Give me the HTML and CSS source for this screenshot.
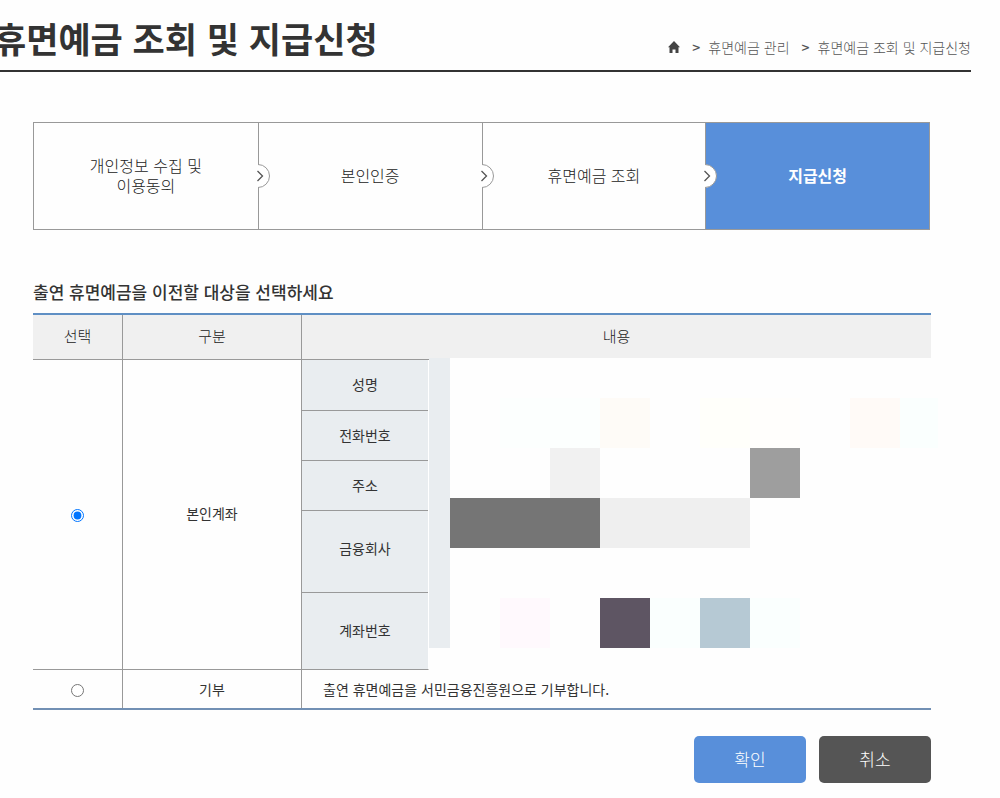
FILE: index.html
```html
<!DOCTYPE html>
<html lang="ko">
<head>
<meta charset="utf-8">
<title>휴면예금 조회 및 지급신청</title>
<meta name="viewport" content="width=device-width, initial-scale=1">
<link rel="stylesheet" href="styles.css">
</head>
<body>
<header class="page-header">
  <h1 class="page-title">휴면예금 조회 및 지급신청</h1>
  <nav class="breadcrumb" aria-label="현재 위치">
    <a class="home" href="#" aria-label="홈"><svg width="12" height="12" viewBox="0 0 12 12" aria-hidden="true"><path fill="#444" d="M6 0 12 6.300H10.500V12H7.500V8.500H4.500V12H1.500V6.300H0Z"/></svg></a>
    <span class="sep">&gt;</span>
    <a href="#">휴면예금 관리</a>
    <span class="sep">&gt;</span>
    <a href="#">휴면예금 조회 및 지급신청</a>
  </nav>
</header>
<main class="content">
  <ol class="steps">
    <li class="step">개인정보 수집 및<br>이용동의</li>
    <li class="step"><svg class="arrow" width="13" height="24" viewBox="0 0 13 24" aria-hidden="true"><path d="M0 0.500H1A11.500 11.500 0 0 1 1 23.500H0Z" fill="#fff"/><path d="M1 0.500A11.500 11.500 0 0 1 1 23.500" fill="none" stroke="#999"/><path d="M0.500 7 5.500 12 0.500 17" fill="none" stroke="#555" stroke-width="1.300"/></svg>본인인증</li>
    <li class="step"><svg class="arrow" width="13" height="24" viewBox="0 0 13 24" aria-hidden="true"><path d="M0 0.500H1A11.500 11.500 0 0 1 1 23.500H0Z" fill="#fff"/><path d="M1 0.500A11.500 11.500 0 0 1 1 23.500" fill="none" stroke="#999"/><path d="M0.500 7 5.500 12 0.500 17" fill="none" stroke="#555" stroke-width="1.300"/></svg>휴면예금 조회</li>
    <li class="step current" aria-current="step"><svg class="arrow" width="13" height="24" viewBox="0 0 13 24" aria-hidden="true"><path d="M0 0.500H1A11.500 11.500 0 0 1 1 23.500H0Z" fill="#fff"/><path d="M1 0.500A11.500 11.500 0 0 1 1 23.500" fill="none" stroke="#999"/><path d="M0.500 7 5.500 12 0.500 17" fill="none" stroke="#555" stroke-width="1.300"/></svg>지급신청</li>
  </ol>
  <form class="transfer">
    <h2 class="section-title">출연 휴면예금을 이전할 대상을 선택하세요</h2>
    <table class="target">
      <colgroup><col class="col-pick"><col class="col-kind"><col class="col-label"><col></colgroup>
      <thead>
        <tr><th scope="col">선택</th><th scope="col">구분</th><th scope="col" colspan="2">내용</th></tr>
      </thead>
      <tbody>
        <tr class="row">
          <td class="pick" rowspan="5"><input type="radio" name="target" id="own" checked></td>
          <td class="kind" rowspan="5"><label for="own">본인계좌</label></td>
          <th class="label" scope="row">성명</th>
          <td class="masked" rowspan="5">
            <div class="mosaic" aria-hidden="true">
              <i class="m1"></i><i class="m2"></i><i class="m3"></i><i class="m4"></i><i class="m5"></i><i class="m6"></i><i class="m7"></i><i class="m8"></i><i class="m9"></i><i class="m10"></i><i class="m11"></i><i class="m12"></i><i class="m13"></i><i class="m14"></i><i class="m15"></i><i class="m16"></i>
            </div>
          </td>
        </tr>
        <tr class="row"><th class="label" scope="row">전화번호</th></tr>
        <tr class="row"><th class="label" scope="row">주소</th></tr>
        <tr class="row tall"><th class="label" scope="row">금융회사</th></tr>
        <tr class="row account"><th class="label" scope="row">계좌번호</th></tr>
        <tr class="donate">
          <td class="pick"><input type="radio" name="target" id="donate"></td>
          <td class="kind"><label for="donate">기부</label></td>
          <td class="note" colspan="2">출연 휴면예금을 서민금융진흥원으로 기부합니다.</td>
        </tr>
      </tbody>
    </table>
    <div class="actions">
      <button class="btn primary" type="submit">확인</button>
      <button class="btn" type="button">취소</button>
    </div>
  </form>
</main>
</body>
</html>
```
FILE: styles.css
```css
* { box-sizing: border-box; }
body {
  margin: 0;
  overflow-x: hidden;
  background: #fefefe;
  color: #222;
  font: 300 14px/20px "Noto Sans CJK KR", sans-serif;
}
a { color: inherit; text-decoration: none; }

.page-header {
  display: flex;
  justify-content: space-between;
  align-items: center;
  height: 72px;
  margin: 0 29px 0 -6px;
  padding-top: 6px;
  border-bottom: 2px solid #333;
}
.page-title { margin: 0; font-size: 35px; line-height: 50px; font-weight: 700; color: #333; }
.breadcrumb { display: flex; align-items: center; padding-top: 18px; color: #555; }
.home { display: flex; }
.sep { width: 28px; padding-left: 4px; text-align: center; font-weight: 500; }

.content { padding: 50px 69px 0 33px; }
.steps {
  display: grid;
  grid-template-columns: repeat(4, 1fr);
  height: 108px;
  margin: 0 1px 0 0;
  padding: 0;
  border: 1px solid #999;
  list-style: none;
}
.step {
  position: relative;
  display: flex;
  align-items: center;
  justify-content: center;
  padding-bottom: 3px;
  text-align: center;
  font-size: 16px;
}
.step + .step { border-left: 1px solid #999; }
.current { background: #588fda; color: #fff; font-weight: 700; }
.arrow { position: absolute; left: -2px; top: 41px; }

.section-title { margin: 50px 0 9px; font-size: 17px; line-height: 24px; font-weight: 500; color: #333; }
.target {
  width: 100%;
  table-layout: fixed;
  border-collapse: separate;
  border-spacing: 0;
  border-top: 2px solid #5f8fc4;
  border-bottom: 2px solid #7290b4;
}
.col-pick { width: 89px; }
.col-kind { width: 179px; }
.col-label { width: 127px; }
.target th, .target td { padding: 0 0 2px; text-align: center; border-bottom: 1px solid #999; font-weight: 400; color: #333; }
.target thead th { height: 45px; background: #f0f0f0; font-size: 15px; font-weight: 300; color: #222; }
.target thead th + th, .target .kind, .target .label, .target .note { border-left: 1px solid #999; }
.row { height: 50px; }
.row:first-child { height: 51px; }
.tall { height: 82px; }
.account { height: 77px; }
.target .label { background: #e9edf0; }
.target .kind { padding-bottom: 3px; }
.target .tall .label { padding-bottom: 7px; }
.target .masked { position: relative; border-left: 1px solid #fff; }
.donate { height: 38px; }
.target .donate td { padding-bottom: 1px; border-bottom: 0; }
.target .note { padding-left: 21px; text-align: left; }
.target input { display: block; width: 13px; height: 13px; margin: 4px auto 0; }

/* Privacy mask over the applicant's details */
.mosaic {
  position: absolute;
  top: -2px;
  bottom: -1px;
  left: 0;
  right: -7px;
  display: grid;
  grid-template-columns: 21px repeat(9, 50px) 1fr;
  grid-template-rows: 40px repeat(5, 50px) 1fr;
  background: #fefefe;
}
.m1 { grid-area: 1 / 1 / 7 / 2; background: #e9edf0; }
.m2 { grid-area: 2 / 5; background: #fefbf7; }
.m3 { grid-area: 2 / 7; background: #fffffa; }
.m4 { grid-area: 2 / 8; background: #fffefc; }
.m5 { grid-area: 2 / 10; background: #fffaf7; }
.m6 { grid-area: 2 / 11; background: #fafffe; }
.m7 { grid-area: 3 / 4; background: #f1f1f1; }
.m8 { grid-area: 3 / 8; background: #9e9e9e; }
.m9 { grid-area: 4 / 2 / 5 / 5; background: #757575; }
.m10 { grid-area: 4 / 5 / 5 / 8; background: #efefef; }
.m11 { grid-area: 6 / 3; background: #fff9fd; }
.m12 { grid-area: 6 / 5; background: #5e5563; }
.m13 { grid-area: 6 / 6; background: #fafffe; }
.m14 { grid-area: 6 / 7; background: #b6c9d4; }
.m15 { grid-area: 6 / 8; background: #fafffe; }
.m16 { grid-area: 2 / 3 / 3 / 5; background: #fcfffe; }

.actions { display: flex; justify-content: flex-end; gap: 13px; margin-top: 26px; }
.btn {
  width: 112px;
  height: 47px;
  padding: 0 0 2px;
  border: 0;
  border-radius: 5px;
  background: #555;
  color: #fff;
  font: 300 17px/24px "Noto Sans CJK KR", sans-serif;
}
.primary { background: #588fda; }
```
